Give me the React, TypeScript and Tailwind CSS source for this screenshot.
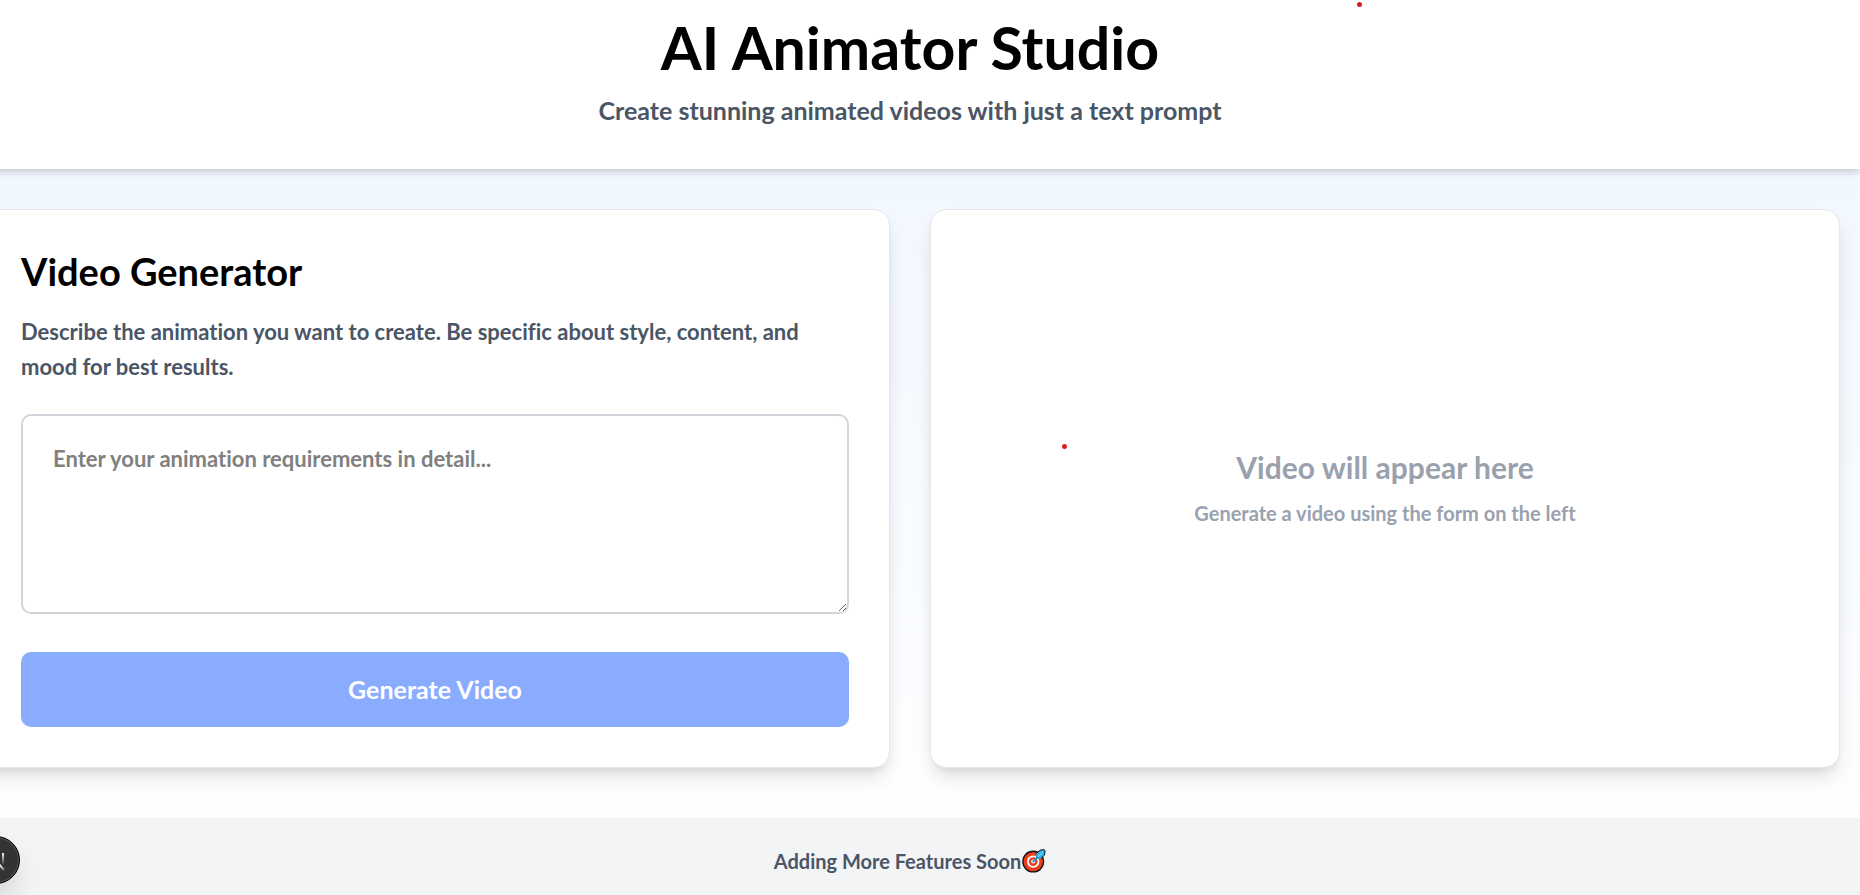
import { useState } from "react";

function TargetIcon() {
  return (
    <svg viewBox="0 0 24 24" className="size-6" role="img" aria-label="Target">
      <circle cx="11.2" cy="12.6" r="11" fill="#111" />
      <circle cx="11.2" cy="12.6" r="9.7" fill="#e8401c" />
      <circle cx="11.2" cy="12.6" r="6.2" fill="#fff" />
      <circle cx="11.2" cy="12.6" r="4.4" fill="#e8401c" />
      <circle cx="11.2" cy="12.6" r="2" fill="#fff" />
      <path d="M13.8 9.4 14.6 4.4 18 1.2l4.2-.6.8 1.2-.4 4.2-3.4 3.2-4.2.8Z" fill="#27b9f0" />
      <path d="M14.4 4.6 18 1.2l4.2-.6.8 1.2-.4 4.2-3.4 3.2" fill="none" stroke="#111" strokeWidth="1" strokeLinejoin="round" />
      <path d="M11.2 12.6 16 7.8" stroke="#1593d6" strokeWidth="1.8" strokeLinecap="round" />
      <path d="M16 7.8 21 3" stroke="#8be0fb" strokeWidth="1" />
    </svg>
  );
}

function DevToolsBadge() {
  return (
    <button
      type="button"
      aria-label="Open developer tools"
      className="fixed -left-7 bottom-[11px] flex size-12 items-center justify-center rounded-full border border-black bg-[#333] shadow-[inset_0_0_0_1px_#555,0_16px_32px_-8px_rgba(0,0,0,0.24)]"
    >
      <svg viewBox="0 0 48 48" className="size-12 shrink-0" fill="none" aria-hidden="true">
        <defs>
          <linearGradient id="bar" x1="0" y1="17" x2="0" y2="29" gradientUnits="userSpaceOnUse">
            <stop stopColor="#fff" />
            <stop offset="1" stopColor="#fff" stopOpacity="0" />
          </linearGradient>
          <linearGradient id="diagonal" x1="28" y1="28" x2="34" y2="36" gradientUnits="userSpaceOnUse">
            <stop stopColor="#fff" />
            <stop offset="1" stopColor="#fff" stopOpacity="0.1" />
          </linearGradient>
        </defs>
        <path d="M18 32V18L32 34" stroke="url(#diagonal)" strokeWidth="2" />
        <path d="M31 17V29" stroke="url(#bar)" strokeWidth="2" />
      </svg>
    </button>
  );
}

export default function App() {
  const [prompt, setPrompt] = useState("");

  return (
    <div className="min-h-screen overflow-x-hidden bg-white font-['Lato','Liberation_Sans',sans-serif] font-bold [font-variant-ligatures:none]">
      <div className="relative -ml-10 flex min-h-screen flex-col bg-linear-to-b from-[#eff6ff] to-white">
        <header className="relative bg-white px-5 pt-2 pb-[39px] text-center shadow-[0_2px_8px_rgba(0,0,0,0.22)]">
          <h1 className="text-[59px] leading-[80px] text-black">AI Animator Studio</h1>
          <p className="pt-0.5 text-[25px] leading-10 text-[#4a5565]">
            Create stunning animated videos with just a text prompt
          </p>
          <span className="absolute top-[2px] right-[498px] size-[5px] rounded-full bg-[#e01b1b]" />
        </header>

        <main className="grid flex-1 grid-cols-2 gap-10 px-5 pt-10 pb-[50px]">
          <section className="rounded-2xl border border-gray-200 bg-white px-10 pt-[38px] pb-10 shadow-[0_12px_20px_-4px_rgba(0,0,0,0.12),0_5px_8px_-4px_rgba(0,0,0,0.1)]">
            <h2 className="text-[38px] leading-[46px] text-black">Video Generator</h2>
            <p className="pt-5 text-[22px] leading-[35px] text-[#4a5565]">
              Describe the animation you want to create. Be specific about style, content, and mood for best results.
            </p>
            <form className="flex flex-col pt-[30px]" onSubmit={(event) => event.preventDefault()}>
              <textarea
                aria-label="Animation requirements"
                value={prompt}
                onChange={(event) => setPrompt(event.target.value)}
                placeholder="Enter your animation requirements in detail..."
                className="h-[200px] w-full resize rounded-[10px] border-2 border-[#d1d5dc] bg-white px-[30px] py-[25px] text-[22px] leading-[35px] text-black placeholder:text-[#808080]"
              />
              <button
                type="submit"
                className="mt-[38px] h-[75px] w-full rounded-[10px] bg-[#8aacff] text-[25px] leading-[35px] text-white"
              >
                Generate Video
              </button>
            </form>
          </section>

          <section className="relative flex flex-col items-center justify-center rounded-2xl border border-gray-200 bg-white pb-0.5 text-center text-[#99a1af] shadow-[0_12px_20px_-4px_rgba(0,0,0,0.12),0_5px_8px_-4px_rgba(0,0,0,0.1)]">
            <h2 className="text-[30px] leading-[45px]">Video will appear here</h2>
            <p className="pt-1.5 text-[20px] leading-[35px]">Generate a video using the form on the left</p>
            <span className="absolute top-[234px] left-[131px] size-[5px] rounded-full bg-[#e01b1b]" />
          </section>
        </main>

        <footer className="flex h-[77px] items-center justify-center gap-px bg-[#f3f4f6] pt-2 text-[20px] leading-[30px] text-[#4a5565]">
          <span>Adding More Features Soon</span>
          <TargetIcon />
        </footer>
      </div>
      <DevToolsBadge />
    </div>
  );
}
